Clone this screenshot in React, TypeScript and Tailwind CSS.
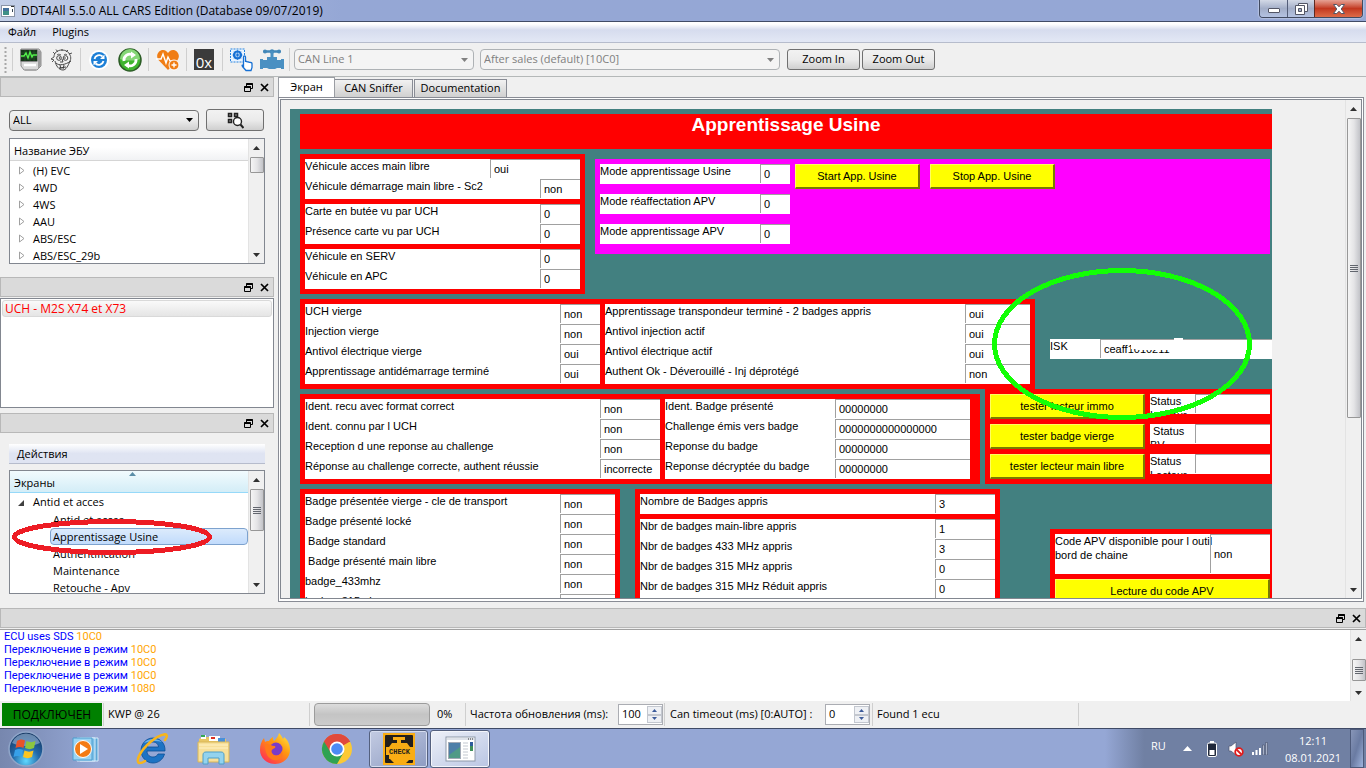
import type { ReactNode } from "react";
import clsx from "clsx";

type Field = {
  label: string;
  value: string;
  cell?: string;
};

const ecuNames = ["(H) EVC", "4WD", "4WS", "AAU", "ABS/ESC", "ABS/ESC_29b"];

const screens = [
  "Antid et acces",
  "Apprentissage Usine",
  "Authentification",
  "Maintenance",
  "Retouche - Apv",
];

const logLines = [
  { text: "ECU uses SDS", mode: "10C0" },
  { text: "Переключение в режим", mode: "10C0" },
  { text: "Переключение в режим", mode: "10C0" },
  { text: "Переключение в режим", mode: "10C0" },
  { text: "Переключение в режим", mode: "1080" },
];

/* ---------- Small widgets ---------- */

const Arrow = ({ down }: { down?: boolean }) => (
  <svg width="7" height="4" viewBox="0 0 7 4" aria-hidden="true">
    <path d={down ? "M0 0h7L3.5 4z" : "M0 4h7L3.5 0z"} fill="#303030" />
  </svg>
);

const ScrollBar = ({ thumb, grip }: { thumb: string; grip?: boolean }) => (
  <div className="flex w-4 shrink-0 flex-col items-center border-l border-[#e3e3e3] bg-[#f0f0f0]">
    <div className="flex h-[17px] shrink-0 items-center">
      <Arrow />
    </div>
    <div
      className={clsx(
        "flex w-[14px] flex-col items-center justify-center gap-px rounded-[1px] border border-[#979797] bg-gradient-to-r from-[#f5f5f5] via-[#e4e4e6] to-[#c2c3c8]",
        thumb
      )}
    >
      {grip &&
        [0, 1, 2, 3].map((i) => <span key={i} className="h-px w-2 bg-[#62666e]" />)}
    </div>
    <div className="min-h-0 flex-1" />
    <div className="flex h-[17px] shrink-0 items-center">
      <Arrow down />
    </div>
  </div>
);

const DockHeader = ({ className }: { className?: string }) => (
  <div
    className={clsx(
      "flex h-5 shrink-0 items-center justify-end gap-[7px] border border-[#b8b8b8] bg-[#dadada] pr-1",
      className
    )}
  >
    <button type="button" aria-label="Float">
      <svg width="9" height="9" viewBox="0 0 9 9" fill="none" stroke="#000">
        <path d="M2.5 3.5v-3h6v5h-2M0.5 3.5h6v5h-6z" />
        <path d="M2 1.2h7M0 4.2h7" strokeWidth="1.4" />
      </svg>
    </button>
    <button type="button" aria-label="Close panel">
      <svg width="9" height="9" viewBox="0 0 9 9" stroke="#000" strokeWidth="1.7">
        <path d="M1 1l7 7M8 1L1 8" />
      </svg>
    </button>
  </div>
);

const Combo = ({
  label,
  value,
  className,
  disabled,
}: {
  label: string;
  value: string;
  className: string;
  disabled?: boolean;
}) => (
  <div className={clsx("relative", className)}>
    <select
      aria-label={label}
      disabled={disabled}
      className={clsx(
        "h-[21px] w-full appearance-none rounded-sm border pr-5 pl-[3px] text-[11px]",
        disabled
          ? "border-[#aeb2b5] bg-[#f4f4f4] text-[#808080]"
          : "border-[#707070] bg-gradient-to-b from-[#f2f2f2] via-[#ebebeb] to-[#cfcfcf] text-black"
      )}
    >
      <option>{value}</option>
    </select>
    <span className="pointer-events-none absolute inset-y-0 right-[6px] flex items-center">
      <svg width="7" height="4" viewBox="0 0 7 4">
        <path d="M0 0h7L3.5 4z" fill={disabled ? "#808080" : "#000"} />
      </svg>
    </span>
  </div>
);

const PushButton = ({
  children,
  className,
  label,
}: {
  children: ReactNode;
  className: string;
  label?: string;
}) => (
  <button
    type="button"
    aria-label={label}
    className={clsx(
      "flex items-center justify-center rounded-[3px] border border-[#707070] bg-gradient-to-b from-[#f2f2f2] via-[#ebebeb] to-[#cfcfcf] text-[11px]",
      className
    )}
  >
    {children}
  </button>
);

const Spin = ({ label, value }: { label: string; value: number }) => (
  <div className="flex h-[21px] w-[45px] border border-[#abadb3] bg-white">
    <input
      type="number"
      aria-label={label}
      defaultValue={value}
      className="w-full min-w-0 [appearance:textfield] pl-[3px] text-[11px] outline-none [&::-webkit-inner-spin-button]:appearance-none"
    />
    <div className="flex w-[15px] shrink-0 flex-col py-px">
      {[false, true].map((down) => (
        <button
          key={String(down)}
          type="button"
          aria-label={down ? "Decrease" : "Increase"}
          className="flex flex-1 items-center justify-center border border-[#c3c7cf] bg-[#eef0f4]"
        >
          <svg width="5" height="3" viewBox="0 0 5 3">
            <path d={down ? "M0 0h5L2.5 3z" : "M0 3h5L2.5 0z"} fill="#3b5a9a" />
          </svg>
        </button>
      ))}
    </div>
  </div>
);

/* ---------- ECU screen widgets ---------- */

const FieldRow = ({ label, value, cell = "w-10" }: Field) => (
  <label className="flex h-5 overflow-hidden bg-white">
    <span className="min-w-0 flex-1 leading-[14px] whitespace-pre-wrap">{label}</span>
    <input
      readOnly
      value={value}
      className={clsx(
        "h-[19px] shrink-0 border-t border-l border-[#a0a0a0] pl-[3px] outline-none",
        cell
      )}
    />
  </label>
);

const Group = ({ rows, cell, className }: { rows: Field[]; cell?: string; className?: string }) => (
  <div className={clsx("bg-white", className)}>
    {rows.map((row) => (
      <FieldRow key={row.label} cell={cell} {...row} />
    ))}
  </div>
);

const YellowButton = ({ children, className }: { children: ReactNode; className?: string }) => (
  <button
    type="button"
    className={clsx(
      "h-[25px] shrink-0 border-t border-r-2 border-b-2 border-l border-t-[#ffff60] border-r-[#7a7a00] border-b-[#7a7a00] border-l-[#ffff60] bg-[#ffff00] text-center",
      className
    )}
  >
    {children}
  </button>
);

const EcuScreen = () => (
  <div className="relative min-w-0 flex-1 overflow-hidden bg-[#428080] pl-[10px] font-['Liberation_Sans',Arial,sans-serif] text-[11px] text-black">
    <div className="mt-[5px] h-[35px] bg-[#ff0000] text-center text-[19px] leading-[22px] font-bold text-white">
      Apprentissage Usine
    </div>

    {/* Access and learning modes */}
    <div className="mt-[5px] flex gap-[10px]">
      <div className="flex w-[285px] shrink-0 flex-col gap-[5px] bg-[#ff0000] p-[5px]">
        <Group
          rows={[
            { label: "Véhicule acces main libre", value: "oui", cell: "w-[90px]" },
            { label: "Véhicule démarrage main libre - Sc2", value: "non" },
          ]}
        />
        <Group
          rows={[
            { label: "Carte en butée vu par UCH", value: "0" },
            { label: "Présence carte vu par UCH", value: "0" },
          ]}
        />
        <Group
          rows={[
            { label: "Véhicule en SERV", value: "0" },
            { label: "Véhicule en APC", value: "0" },
          ]}
        />
      </div>
      <div className="mt-[5px] mr-[2px] flex h-[95px] flex-1 items-start bg-[#ff00ff] p-[5px]">
        <div className="flex w-[190px] flex-col gap-[10px]">
          <FieldRow label="Mode apprentissage Usine" value="0" cell="w-[30px]" />
          <FieldRow label="Mode réaffectation APV" value="0" cell="w-[30px]" />
          <FieldRow label="Mode apprentissage APV" value="0" cell="w-[30px]" />
        </div>
        <YellowButton className="ml-[5px] w-[125px]">Start App. Usine</YellowButton>
        <YellowButton className="ml-[10px] w-[125px]">Stop App. Usine</YellowButton>
      </div>
    </div>

    {/* Immobiliser state */}
    <div className="mt-[5px] flex">
      <div className="flex w-[735px] shrink-0 gap-[5px] bg-[#ff0000] p-[5px]">
        <Group
          className="w-[295px]"
          rows={[
            { label: "UCH vierge", value: "non" },
            { label: "Injection vierge", value: "non" },
            { label: "Antivol électrique vierge", value: "oui" },
            { label: "Apprentissage antidémarrage terminé", value: "oui" },
          ]}
        />
        <Group
          className="flex-1"
          cell="w-[65px]"
          rows={[
            { label: "Apprentissage transpondeur terminé - 2 badges appris", value: "oui" },
            { label: "Antivol injection actif", value: "oui" },
            { label: "Antivol électrique actif", value: "oui" },
            { label: "Authent Ok - Déverouillé - Inj déprotégé", value: "non" },
          ]}
        />
      </div>
      <div className="relative mt-10 ml-[15px] min-w-0 flex-1">
        <label className="flex h-5 bg-white">
          <span className="w-[50px] shrink-0 leading-[14px]">ISK</span>
          <input
            readOnly
            value="ceaff1010211"
            className="h-[19px] min-w-0 flex-1 border-t border-l border-[#a0a0a0] pl-[3px] outline-none"
          />
        </label>
        <svg
          className="absolute -top-px left-[80px]"
          width="60"
          height="21"
          viewBox="0 0 60 21"
          fill="#fff"
          aria-hidden="true"
        >
          <path d="M1 3h58v12H44l-3-3H8v-1H1zM44 0h9v4h-9z" />
        </svg>
      </div>
    </div>

    {/* Badge identification */}
    <div className="mt-[5px] flex gap-[5px]">
      <div className="flex w-[680px] shrink-0 gap-[5px] bg-[#ff0000] p-[5px] pr-[10px]">
        <Group
          className="w-[355px]"
          cell="w-[60px]"
          rows={[
            { label: "Ident. recu avec format correct", value: "non" },
            { label: "Ident. connu par l UCH", value: "non" },
            { label: "Reception d une reponse au challenge", value: "non" },
            { label: "Réponse au challenge correcte, authent réussie", value: "incorrecte" },
          ]}
        />
        <Group
          className="flex-1"
          cell="w-[135px]"
          rows={[
            { label: "Ident. Badge présenté", value: "00000000" },
            { label: "Challenge émis vers badge", value: "0000000000000000" },
            { label: "Reponse du badge", value: "00000000" },
            { label: "Reponse décryptée du badge", value: "00000000" },
          ]}
        />
      </div>
      <div className="-mt-[5px] flex min-w-0 flex-1 flex-col gap-[5px] bg-[#ff0000] p-[5px] pr-[2px]">
        {[
          { action: "tester lecteur immo", status: "Status Lecteur" },
          { action: "tester badge vierge", status: " Status BV" },
          { action: "tester lecteur main libre", status: "Status Lecteur" },
        ].map((row) => (
          <div key={row.action} className="flex gap-[5px]">
            <YellowButton className="w-[155px]">{row.action}</YellowButton>
            <div className="min-w-0 flex-1">
              <FieldRow label={row.status} value="" cell="w-[75px]" />
            </div>
          </div>
        ))}
      </div>
    </div>

    {/* Learned badges */}
    <div className="mt-[5px] flex items-start">
      <div className="w-[320px] shrink-0 bg-[#ff0000] p-[5px]">
        <Group
          cell="w-[55px]"
          rows={[
            { label: "Badge présentée vierge - cle de transport", value: "non" },
            { label: "Badge présenté locké", value: "non" },
            { label: " Badge standard", value: "non" },
            { label: " Badge présenté main libre", value: "non" },
            { label: "badge_433mhz", value: "non" },
            { label: "badge_315mhz", value: "non" },
          ]}
        />
      </div>
      <div className="ml-[15px] flex w-[365px] shrink-0 flex-col gap-[5px] bg-[#ff0000] p-[5px]">
        <FieldRow label="Nombre de Badges appris" value="3" cell="w-[60px]" />
        <Group
          cell="w-[60px]"
          rows={[
            { label: "Nbr de badges main-libre appris", value: "1" },
            { label: "Nbr de badges 433 MHz appris", value: "3" },
            { label: "Nbr de badges 315 MHz appris", value: "0" },
            { label: "Nbr de badges 315 MHz Réduit appris", value: "0" },
          ]}
        />
      </div>
      <div className="mt-10 ml-[50px] flex min-w-0 flex-1 flex-col gap-[5px] bg-[#ff0000] p-[5px] pr-[2px]">
        <label className="flex h-10 bg-white">
          <span className="min-w-0 flex-1 leading-[14px] whitespace-nowrap">
            Code APV disponible pour l outil
            <br />
            bord de chaine
          </span>
          <input
            readOnly
            value="non"
            className="h-[39px] w-[60px] shrink-0 border-t border-l border-[#a0a0a0] pl-[3px] outline-none"
          />
        </label>
        <YellowButton>Lecture du code APV</YellowButton>
      </div>
    </div>

    {/* Hand-drawn marker around the ISK field */}
    <svg
      className="pointer-events-none absolute top-[159px] left-[702px]"
      width="260"
      height="152"
      viewBox="0 0 260 152"
      shapeRendering="crispEdges"
      aria-hidden="true"
    >
      <ellipse cx="130" cy="76" rx="127.5" ry="73.5" fill="none" stroke="#12ff05" strokeWidth="5" />
    </svg>
  </div>
);

/* ---------- Window chrome ---------- */

const TitleBar = () => (
  <header className="flex h-[22px] shrink-0 items-start border-b border-[#414c66] bg-gradient-to-r from-[#c3cfe8] via-[#95a7d5] via-25% to-[#95a7d5] pr-[3px]">
    <svg className="mt-[5px] ml-px" width="14" height="12" viewBox="0 0 14 12">
      <rect x="0.5" y="0.5" width="13" height="11" fill="#fff" stroke="#8a94a6" />
      <rect x="2" y="3" width="6" height="7" fill="#3f8f86" />
      <rect x="2" y="3" width="6" height="3" fill="#44709c" />
      <path d="M10 1.5h3" stroke="#333" />
      <path d="M11.5 4v3" stroke="#345" />
    </svg>
    <h1 className="ml-[6px] flex-1 text-xs leading-[21px]">
      DDT4All 5.5.0 ALL CARS Edition (Database 09/07/2019)
    </h1>
    <div className="flex h-[18px] overflow-hidden rounded-b-[4px] border border-t-0 border-[#414a60] shadow-[0_0_2px_#fff]">
      <button
        type="button"
        aria-label="Minimize"
        className="flex w-7 items-center justify-center border-r border-[#535d78] bg-gradient-to-b from-[#d3d9e6] via-[#a3aec8] to-[#b4c2e2]"
      >
        <svg className="mt-1" width="12" height="5" viewBox="0 0 12 5">
          <rect x="0.5" y="0.5" width="11" height="4" rx="0.5" fill="#fff" stroke="#535666" />
        </svg>
      </button>
      <button
        type="button"
        aria-label="Restore"
        className="flex w-[27px] items-center justify-center border-r border-[#5e2a22] bg-gradient-to-b from-[#d3d9e6] via-[#a3aec8] to-[#b4c2e2]"
      >
        <svg width="13" height="12" viewBox="0 0 13 12" fill="#fff" stroke="#535666">
          <path d="M3.5 0.5h9v8h-9z" />
          <path d="M0.5 2.5h9v9h-9z" />
          <path d="M3.5 5.5h3v3h-3z" fill="#a3aec8" />
        </svg>
      </button>
      <button
        type="button"
        aria-label="Close"
        className="flex w-[47px] items-center justify-center bg-gradient-to-b from-[#e5a194] via-[#c2371f] to-[#dd6b48]"
      >
        <svg width="12" height="10" viewBox="0 0 12 10">
          <path
            d="M0.5 0.5h3.3L6 2.8 8.2 0.5h3.3L8.2 5l3.3 4.5H8.2L6 7.2 3.8 9.5H0.5L3.8 5z"
            fill="#fff"
            stroke="#535666"
          />
        </svg>
      </button>
    </div>
  </header>
);

const Separator = ({ className }: { className?: string }) => (
  <span className={clsx("h-[23px] w-px shrink-0 bg-[#cfcfcf]", className)} />
);

const ToolButton = ({
  label,
  className,
  children,
}: {
  label: string;
  className?: string;
  children: ReactNode;
}) => (
  <button type="button" aria-label={label} className={clsx("shrink-0", className)}>
    <svg width="24" height="24" viewBox="0 0 24 24" fill="none">
      {children}
    </svg>
  </button>
);

const ToolBar = () => (
  <div className="flex h-[34px] shrink-0 items-center border-b border-[#b4b8b8] bg-[#f0f0f0]">
    <svg className="ml-1 shrink-0" width="3" height="26" viewBox="0 0 3 26">
      <path d="M1.5 0v26" stroke="#a8a8a8" strokeWidth="2" strokeDasharray="2 2" />
    </svg>
    <Separator className="ml-[5px]" />
    <ToolButton label="Scan ECU" className="ml-[5px]">
      <path d="M3 1h18l2 3v14l-4 4H6l-3-4z" fill="#d9d9d9" stroke="#8d8d8d" />
      <path d="M20 2l3 2v13l-3 4z" fill="#9c9c9c" />
      <rect x="2.5" y="1.5" width="17" height="12" rx="1" fill="#17351a" stroke="#888" />
      <path d="M3 5h16M3 9h16M7 2v11M12 2v11M16 2v11" stroke="#2d6b31" strokeWidth="0.5" />
      <path d="M3 8h3l2-3 2 5 2-6 2 5 1-2h4" stroke="#53f04b" strokeWidth="1.4" />
      <path d="M6 17h12" stroke="#fff" strokeWidth="2.5" />
      <path d="M7 22h11" stroke="#aaa" strokeWidth="2" />
    </ToolButton>
    <ToolButton label="Expert mode" className="ml-2">
      <path
        d="M4 9c0-4 3-7 8-7 4 0 7 2 8 5M4 9l-3 2 3 1-2 2M20 7c1 2 1 4 0 6M5 6L3 4M8 4L6 1.5M12 3V1M16 4l2-2M19 6l3-1"
        stroke="#444"
        strokeWidth="0.9"
      />
      <circle cx="9" cy="10" r="2.3" fill="#fff" stroke="#444" />
      <circle cx="15.5" cy="10" r="2.3" fill="#fff" stroke="#444" />
      <circle cx="9.5" cy="10" r="0.8" fill="#222" />
      <circle cx="15" cy="10" r="0.8" fill="#222" />
      <path
        d="M12 11l1 3-3 0M6 15c3 3 9 2 15-2M5 13c1 5 4 9 8 9 3 0 5-4 7-9M10 17l1 4M14 17l-1 4M9 20l7-1"
        stroke="#333"
        strokeWidth="0.9"
      />
      <path d="M7 7c1-1 2-1 4 0M14 7c1-1 2-1 3 0" stroke="#333" strokeWidth="0.8" />
    </ToolButton>
    <Separator className="ml-[6px]" />
    <ToolButton label="Refresh" className="ml-[6px]">
      <circle cx="12" cy="12" r="10" fill="#fff" />
      <circle cx="12" cy="12" r="8" fill="#1c7fd6" />
      <path d="M7.5 11a4.8 4.8 0 0 1 8-2.5M16.5 13a4.8 4.8 0 0 1-8 2.5" stroke="#fff" strokeWidth="1.8" />
      <path d="M17.5 6.5v4.5h-4.5zM6.5 17.5V13H11z" fill="#fff" />
    </ToolButton>
    <ToolButton label="Auto refresh" className="ml-[7px]">
      <circle cx="12" cy="12" r="11" fill="#3fb52f" stroke="#2c5c26" strokeWidth="1.5" />
      <path d="M2 11a10 10 0 0 1 20 0c-4 2-15 2-20 0z" fill="#84d676" />
      <path d="M6 13a6 6 0 0 1 9-6M18 11a6 6 0 0 1-9 6" stroke="#fff" strokeWidth="2.8" />
      <path d="M13 3.5l5 3.5-5 3.5zM11 20.5L6 17l5-3.5z" fill="#fff" />
    </ToolButton>
    <Separator className="ml-[6px]" />
    <ToolButton label="Diagnostic" className="ml-[7px]">
      <path d="M12 22L2.5 12C-1 7 3 2 7 2c2.5 0 4 1.5 5 3 1-1.5 2.5-3 5-3 4 0 8 5 4.5 10z" fill="#f07d14" />
      <path d="M0 11h5l2-5 3 9 2-6 2 4h3" stroke="#fff" strokeWidth="1.4" />
      <circle cx="18" cy="17" r="5" fill="#f07d14" stroke="#fff" />
      <path d="M18 14.5v5M15.5 17h5" stroke="#fff" strokeWidth="1.4" />
    </ToolButton>
    <Separator className="ml-[6px]" />
    <button
      type="button"
      className="ml-[7px] h-[21px] w-5 shrink-0 bg-[#3b3b3b] pt-1 text-center font-['Open_Sans',sans-serif] text-[15px] leading-4 text-white"
    >
      0x
    </button>
    <Separator className="ml-2" />
    <ToolButton label="Manual request" className="ml-[6px]">
      <rect x="1.5" y="1" width="14" height="13" fill="#eaf4ff" stroke="#2583e0" strokeDasharray="2 1" />
      <circle cx="8.5" cy="7" r="3.5" stroke="#1670d4" strokeWidth="2.2" />
      <circle cx="8.5" cy="7" r="1" fill="#1670d4" />
      <path d="M8.5 2v10M3.5 7h10M5 3.5l7 7M12 3.5l-7 7" stroke="#1670d4" strokeWidth="0.7" />
      <path
        d="M14.500 18v-9c0-1.500 2-1.500 2 0v5c0-1 2-1 2 0.500 0-1 2-1 2 0.500 0-1 2.500-1 2.500 0.500v4l-1 3h-5l-3.500-4c-1-1.500 0-2 1-0.500z"
        fill="#fff"
        stroke="#1670d4"
        strokeWidth="1.3"
      />
    </ToolButton>
    <ToolButton label="Bus settings" className="ml-[7px]">
      <path d="M4.5 3.5h15" stroke="#4287b8" strokeWidth="2.5" strokeLinecap="round" />
      <circle cx="5" cy="3.5" r="2" fill="#4287b8" />
      <circle cx="19" cy="3.5" r="2" fill="#4287b8" />
      <circle cx="12" cy="3.5" r="2.2" fill="#4287b8" />
      <path
        d="M10.500 3h3v6H17v3h4v-1h3v10h-3v-1h-4l-2 1H9l-2-1H3v1H0V11h3v1h4V9h3.500z"
        fill="#4a90c2"
      />
    </ToolButton>
    <Separator className="ml-[5px]" />
    <Combo label="CAN line" value="CAN Line 1" className="ml-1 w-[180px]" disabled />
    <Combo
      label="Diagnostic session"
      value="After sales (default) [10C0]"
      className="ml-[6px] w-[300px]"
      disabled
    />
    <PushButton className="ml-[7px] h-[21px] w-[73px]">Zoom In</PushButton>
    <PushButton className="ml-[2px] h-[21px] w-[73px]">Zoom Out</PushButton>
  </div>
);

const SideBar = () => (
  <aside className="flex w-[274px] shrink-0 flex-col">
    {/* ECU list */}
    <DockHeader />
    <div className="mt-3 flex items-center gap-[7px] px-[9px]">
      <Combo label="Vehicle" value="ALL" className="w-[190px]" />
      <PushButton label="Search ECU" className="h-[22px] w-[58px]">
        <svg width="17" height="17" viewBox="0 0 17 17" fill="none" stroke="#222">
          <path
            d="M1.5 1.5h3v3h-3zM7.5 1.5h3v3h-3zM1.5 7.5h3v3h-3z"
            fill="#888"
            strokeWidth="1.5"
          />
          <circle cx="10.5" cy="9.5" r="4" fill="#fff" strokeWidth="1.4" />
          <path d="M13.5 12.5l3 3.5" strokeWidth="2" />
        </svg>
      </PushButton>
    </div>
    <div className="mx-[9px] mt-[7px] flex h-[126px] shrink-0 border border-[#828790] bg-white">
      <div className="flex min-w-0 flex-1 flex-col overflow-hidden">
        <div className="h-[22px] shrink-0 border-b border-[#d5d5d5] bg-gradient-to-b from-white from-40% to-[#f1f2f4] pl-1 leading-6">
          Название ЭБУ
        </div>
        <ul role="tree" className="pt-px">
          {ecuNames.map((name) => (
            <li key={name} role="treeitem" className="flex h-[17px] items-center pl-[9px] leading-[17px]">
              <svg width="6" height="9" viewBox="0 0 6 9" className="mr-[8px]">
                <path d="M0.5 1v7L5 4.5z" fill="#fff" stroke="#a0a0a0" />
              </svg>
              {name}
            </li>
          ))}
        </ul>
      </div>
      <ScrollBar thumb="h-4 mt-px" />
    </div>

    {/* Selected ECU */}
    <DockHeader className="mt-[13px]" />
    <ul className="mt-px h-[110px] shrink-0 border border-[#828790] bg-white p-px">
      <li className="h-[17px] rounded-[3px] border border-[#d9d9d9] bg-gradient-to-b from-[#fafafa] to-[#e5e5e5] pl-[2px] text-xs leading-4 text-[#ff0000]">
        UCH - M2S X74 et X73
      </li>
    </ul>

    {/* Screens */}
    <DockHeader className="mt-[5px]" />
    <div className="mx-[9px] mt-[11px] h-5 shrink-0 border-b border-[#b6bccc] bg-gradient-to-b from-white via-[#dfe4f2] to-[#dfe4f2] pl-2 leading-5">
      Действия
    </div>
    <div className="relative mx-[9px] mt-[6px] flex h-[124px] shrink-0 border border-[#828790] bg-white">
      <div className="flex min-w-0 flex-1 flex-col overflow-hidden">
        <div className="relative h-[22px] shrink-0 border-b border-[#96d9f9] bg-gradient-to-b from-[#f2fbfe] to-[#d3edf7] pl-1 leading-6">
          Экраны
          <svg className="absolute top-px left-1/2" width="7" height="4" viewBox="0 0 7 4">
            <path d="M0 4h7L3.5 0z" fill="#5b8ea8" />
          </svg>
        </div>
        <ul role="tree" className="pt-px">
          <li role="treeitem" aria-expanded="true">
            <div className="flex h-[17px] items-center pl-2">
              <svg width="6" height="6" viewBox="0 0 6 6" className="mr-[9px]">
                <path d="M6 0v6H0z" fill="#404040" />
              </svg>
              Antid et acces
            </div>
            <ul role="group">
              {screens.map((name) => (
                <li
                  key={name}
                  role="treeitem"
                  className={clsx(
                    "ml-10 h-[17px] border pl-[2px] leading-[15px]",
                    name === "Apprentissage Usine"
                      ? "rounded-sm border-[#7da2ce] bg-gradient-to-b from-[#dcebfc] to-[#c1dbfc]"
                      : "border-transparent"
                  )}
                >
                  {name}
                </li>
              ))}
            </ul>
          </li>
        </ul>
      </div>
      <ScrollBar thumb="mt-px h-[42px]" grip />
      {/* Hand-drawn marker around the selected screen */}
      <svg
        className="pointer-events-none absolute top-[48px] left-[2px]"
        width="200"
        height="36"
        viewBox="0 0 200 36"
        shapeRendering="crispEdges"
        aria-hidden="true"
      >
        <ellipse cx="100" cy="18" rx="97.5" ry="15.5" fill="none" stroke="#ed1c24" strokeWidth="5" />
      </svg>
    </div>
  </aside>
);

const Tabs = () => (
  <div role="tablist" className="flex h-5 items-end">
    <button
      type="button"
      role="tab"
      aria-selected="true"
      className="h-5 w-[57px] border border-b-0 border-[#9a9da3] bg-white"
    >
      Экран
    </button>
    <button
      type="button"
      role="tab"
      className="h-[18px] w-[78px] border border-b-0 border-l-0 border-[#898c95] bg-gradient-to-b from-[#f2f2f2] to-[#d0d0d0]"
    >
      CAN Sniffer
    </button>
    <button
      type="button"
      role="tab"
      className="ml-px h-[18px] w-[93px] border border-b-0 border-[#898c95] bg-gradient-to-b from-[#f2f2f2] to-[#d0d0d0]"
    >
      Documentation
    </button>
  </div>
);

const StatusBar = () => (
  <footer className="flex h-[27px] shrink-0 items-center bg-[#f0f0f0] text-[11px]">
    <span className="ml-[2px] h-[23px] w-[100px] bg-[#008000] text-center text-xs leading-6">
      ПОДКЛЮЧЕН
    </span>
    <Separator className="ml-px" />
    <span className="ml-1 w-[201px]">KWP @ 26</span>
    <Separator />
    <div
      role="progressbar"
      aria-label="Progress"
      aria-valuenow={0}
      className="ml-1 h-[23px] w-[116px] rounded-sm border border-[#9c9c9c] bg-gradient-to-b from-[#dcdcdc] via-[#c4c4c4] to-[#cccccc]"
    />
    <span className="ml-[7px] w-7">0%</span>
    <Separator />
    <span className="ml-1 w-[148px] whitespace-nowrap">Частота обновления (ms):</span>
    <Spin label="Частота обновления (ms)" value={100} />
    <Separator className="ml-px" />
    <span className="ml-[5px] w-[155px] whitespace-nowrap">Can timeout (ms) [0:AUTO] :</span>
    <Spin label="Can timeout (ms)" value={0} />
    <Separator className="ml-[2px]" />
    <span className="ml-1 w-[201px]">Found 1 ecu</span>
    <Separator />
  </footer>
);

const TaskIcon = ({
  label,
  className,
  children,
}: {
  label: string;
  className: string;
  children: ReactNode;
}) => (
  <button type="button" aria-label={label} className={clsx("flex shrink-0 items-center justify-center", className)}>
    <svg width="36" height="36" viewBox="0 0 36 36" fill="none">
      {children}
    </svg>
  </button>
);

const TaskBar = () => (
  <nav className="flex h-10 shrink-0 items-center border-t border-[#3f4a66] bg-gradient-to-r from-[#7787ae] via-[#95a7d5] via-7% to-[#95a7d5]">
    <TaskIcon label="Start" className="ml-2 w-9">
      <defs>
        <radialGradient id="orb" cx="50%" cy="85%" r="80%">
          <stop offset="0" stopColor="#5fd8ff" />
          <stop offset="0.5" stopColor="#2268a8" />
          <stop offset="1" stopColor="#173a66" />
        </radialGradient>
      </defs>
      <circle cx="18" cy="18" r="17" fill="url(#orb)" stroke="#8fa5c8" strokeWidth="1.5" />
      <path d="M4 12a15 15 0 0 1 28 0c-8 4-20 4-28 0z" fill="#a9c4e4" opacity="0.55" />
      <path d="M9 10c3-2 5-2 8-0.5L15.5 17c-3-1.500-5-1.500-8 0z" fill="#e8532a" />
      <path d="M18.5 10c3 1.500 6 1.500 9 0l-1.500 7c-3 1.500-6 1.500-9 0z" fill="#8cc63f" />
      <path d="M7 19c3-1.500 5-1.500 8 0l-1.500 7c-3-1.500-5-1.500-8 0z" fill="#37a0e8" />
      <path d="M16.5 19.5c3 1.500 6 1.500 9 0L24 26c-3 1.500-6 1.500-9 0z" fill="#fbc520" />
    </TaskIcon>
    <TaskIcon label="Media Player" className="ml-[25px] w-9">
      <path d="M11 7h18v23H11z" fill="#5ba6d6" stroke="#d7ecfa" />
      <path d="M8 7h18v23H8z" fill="#7cc0e8" stroke="#d7ecfa" />
      <path d="M4 7h19v22H4z" fill="#9bd4f2" stroke="#4d9cce" />
      <circle cx="14" cy="18" r="8.5" fill="#f47b14" stroke="#fff" />
      <path d="M11 13v10l8-5z" fill="#fff" />
    </TaskIcon>
    <TaskIcon label="Internet Explorer" className="ml-[29px] w-9">
      <path
        d="M31 20H13c0 4 3 6 6 6 2.500 0 4-1 5-3h6.500c-1.500 5.500-6 9-11.500 9C12 32 7 26 7 19.500S12 7 19 7s12.500 5 12 13zM13 16h11.500c0-3-2.500-5-5.500-5s-5.500 2-6 5z"
        fill="#1d73c4"
        stroke="#0d4f96"
        strokeWidth="0.8"
      />
      <path d="M10 12c3-4 12-6 18-1-6-2-12-1-18 1z" fill="#7ec3f5" opacity="0.8" />
      <path
        d="M31 9c3-4 2-6-1-5.500C22 5 10 15 5 25c-3 7 0 9 6 5"
        stroke="#f7b51c"
        strokeWidth="2.6"
        strokeLinecap="round"
      />
    </TaskIcon>
    <TaskIcon label="Explorer" className="ml-[25px] w-9">
      <path d="M4 8l3-2h8l2 2h14v5H4z" fill="#e8c665" />
      <rect x="6" y="4" width="5" height="4" fill="#fff" />
      <rect x="6" y="4" width="4" height="2" fill="#34a853" />
      <rect x="14" y="5" width="11" height="5" fill="#fff" />
      <rect x="16" y="6" width="4" height="2" fill="#d93025" />
      <rect x="23" y="7" width="7" height="4" fill="#4a90d9" />
      <path d="M3 11h31v20H3z" fill="#f7e09a" stroke="#d8b659" />
      <path d="M4 14h29M4 17h29" stroke="#fff2c5" />
      <path d="M8 33V24c0-2 1-3 3-3h15c2 0 3 1 3 3v9h-5v-6H13v6z" fill="#93d3ee" stroke="#4f9fc8" />
    </TaskIcon>
    <TaskIcon label="Firefox" className="ml-[26px] w-9">
      <defs>
        <linearGradient id="fox" x1="1" y1="0" x2="0.2" y2="1">
          <stop offset="0" stopColor="#fff04a" />
          <stop offset="0.45" stopColor="#ff980e" />
          <stop offset="1" stopColor="#ff2b56" />
        </linearGradient>
      </defs>
      <path
        d="M22 2c2 2 3 4 4 6 1-1 1-2 1-2 4 3 6 8 6 13 0 8-7 14-15 14S3 27 3 19c0-5 1-8 4-12l1 4c1-1 2-1 4-1 1-2 2-3 4-4 0 1 0 3 1 4 2-2 4-4 5-8z"
        fill="url(#fox)"
      />
      <circle cx="19" cy="18" r="6.5" fill="#7a3cc8" />
      <path d="M8 14c4-2 6 1 9 1 2 0 2 2-1 3-2 1-2 4 1 6 4 2 7-1 8-4 2 7-3 10-8 9-6-1-9-7-9-15z" fill="#ff7a1a" />
    </TaskIcon>
    <TaskIcon label="Chrome" className="ml-[26px] w-9">
      <circle cx="18" cy="18" r="15" fill="#fcc934" />
      <path d="M18 18L5 10.5A15 15 0 0 1 31 10.5z" fill="#e04a3c" />
      <path d="M5 10.5A15 15 0 0 0 18 33l6.500-11.300L18 18z" fill="#2fa252" />
      <path d="M18 11h13.200A15 15 0 0 0 5 10.5L12 22z" fill="#e04a3c" />
      <circle cx="18" cy="18" r="7.5" fill="#fff" />
      <circle cx="18" cy="18" r="5.8" fill="#4c8bf5" />
    </TaskIcon>
    <TaskIcon
      label="Check engine"
      className="ml-[14px] h-[38px] w-[59px] rounded-[3px] border border-[#54607e] bg-gradient-to-br from-[#c3cbe2] to-[#8e9cc2] shadow-[inset_0_0_0_1px_#d6ddef]"
    >
      <rect x="2" y="2" width="32" height="32" fill="#f9ad14" />
      <rect x="4" y="4" width="28" height="28" rx="1" fill="#231f1c" />
      <path
        d="M12 6h12v3h-4v3h6l3 4h3v13h-4l-3 3H13l-4-4H8v-4H5v-8h3l3-4h5V9h-4z"
        fill="#f9ad14"
      />
      <text
        x="18.5"
        y="23"
        fill="#231f1c"
        fontSize="7"
        fontWeight="bold"
        textAnchor="middle"
        fontFamily="Liberation Mono, monospace"
      >
        CHECK
      </text>
    </TaskIcon>
    <TaskIcon
      label="DDT4All"
      className="ml-[2px] h-[38px] w-[60px] rounded-[3px] border border-[#54607e] bg-gradient-to-br from-[#eef1f8] to-[#b9c5e3] shadow-[inset_0_0_0_1px_#f4f6fb]"
    >
      <rect x="4" y="6" width="29" height="24" fill="#fff" stroke="#8e99aa" />
      <path d="M5 8h27" stroke="#dfe3ea" strokeWidth="2" />
      <path d="M26 8h1M28 8h1M30 8h1" stroke="#333" />
      <rect x="6.5" y="11.5" width="12" height="16" fill="#4f9a86" stroke="#a0a8b5" />
      <path d="M7 12h11v4L7 24z" fill="#4d7fa8" />
      <path d="M21 12h5M21 15h5M21 18h5M21 21h5M21 24h5M21 27h5" stroke="#c3c8d0" />
      <rect x="28" y="11" width="3" height="9" fill="#3f8f5a" />
      <rect x="28" y="11" width="3" height="4" fill="#2d5c9c" />
    </TaskIcon>

    {/* Tray */}
    <div className="ml-auto flex h-full items-center bg-gradient-to-r from-[#95a7d5] to-[#7080a3] to-15% pr-[2px] pl-[46px] text-white">
      <span className="mb-1 w-[16px] text-[11px]">RU</span>
      <svg className="ml-4" width="9" height="5" viewBox="0 0 9 5">
        <path d="M0 5h9L4.5 0z" fill="#fff" />
      </svg>
      <svg className="ml-[15px]" width="10" height="16" viewBox="0 0 10 16">
        <rect x="0.5" y="2" width="9" height="13.5" rx="1.5" fill="#20283a" stroke="#fff" />
        <rect x="3" y="0" width="4" height="2" fill="#fff" />
        <rect x="2.5" y="9" width="5" height="5" fill="#fff" />
      </svg>
      <svg className="ml-[11px]" width="16" height="16" viewBox="0 0 16 16">
        <path d="M1 5h2l5-4v13l-5-4H1z" fill="#fff" stroke="#4a5570" strokeWidth="0.7" />
        <circle cx="11" cy="11" r="3.8" fill="#fff" stroke="#e01b1b" strokeWidth="1.8" />
        <path d="M8.5 8.5l5 5" stroke="#e01b1b" strokeWidth="1.8" />
      </svg>
      <svg className="ml-2" width="16" height="13" viewBox="0 0 16 13">
        <path d="M0 10h2v3H0zM3.500 8h2v5h-2zM7 6h2v7H7z" fill="#fff" />
        <path d="M10.500 3h2v10h-2zM13.500 0.500h2V13h-2z" fill="#a9b2c8" stroke="#3d4761" strokeWidth="0.5" />
      </svg>
      <div className="ml-4 w-[58px] text-center text-[11px] leading-[17px] whitespace-nowrap">
        <div>12:11</div>
        <div>08.01.2021</div>
      </div>
      <button
        type="button"
        aria-label="Show desktop"
        className="ml-2 h-full w-[14px] border border-[#4d5a7a] bg-gradient-to-br from-[#8896b8] via-[#6a7ba2] to-[#a0b4dd]"
      />
    </div>
  </nav>
);

const App = () => {
  return (
    <div className="flex h-screen flex-col overflow-hidden bg-[#f0f0f0] font-['Open_Sans','Noto_Sans',sans-serif] text-[11px] text-black">
      <TitleBar />
      <div className="flex h-[21px] shrink-0 items-center gap-4 border-b border-[#b6bccc] bg-gradient-to-b from-white from-10% via-[#d6dcee] via-40% to-[#e3e8f5] px-2">
        <button type="button">Файл</button>
        <button type="button">Plugins</button>
      </div>
      <ToolBar />

      <main className="flex min-h-0 flex-1">
        <SideBar />
        <section className="mb-[6px] ml-1 flex min-w-0 flex-1 flex-col pr-[2px]">
          <Tabs />
          <div className="flex min-h-0 flex-1 border border-[#898c95] bg-white p-px pb-[2px]">
            <div className="flex min-w-0 flex-1 border border-[#828790] bg-[#f0f0f0]">
              <div className="flex min-w-0 flex-1 overflow-hidden pt-[9px] pr-[73px] pl-[9px]">
                <EcuScreen />
              </div>
              <ScrollBar thumb="mt-px h-[300px]" grip />
            </div>
          </div>
        </section>
      </main>

      {/* Log */}
      <DockHeader />
      <div className="mt-px flex h-[72px] shrink-0 border-t border-[#a0a0a0] bg-white">
        <div className="min-w-0 flex-1 pl-1 font-['Roboto','Open_Sans',sans-serif] text-[11px] leading-[13px] text-[#0000ff]">
          {logLines.map((line, index) => (
            <p key={index}>
              {line.text} <span className="text-[#ffa500]">{line.mode}</span>
            </p>
          ))}
        </div>
        <ScrollBar thumb="mt-3 h-[22px]" grip />
      </div>
      <StatusBar />
      <TaskBar />
    </div>
  );
};

export default App;
